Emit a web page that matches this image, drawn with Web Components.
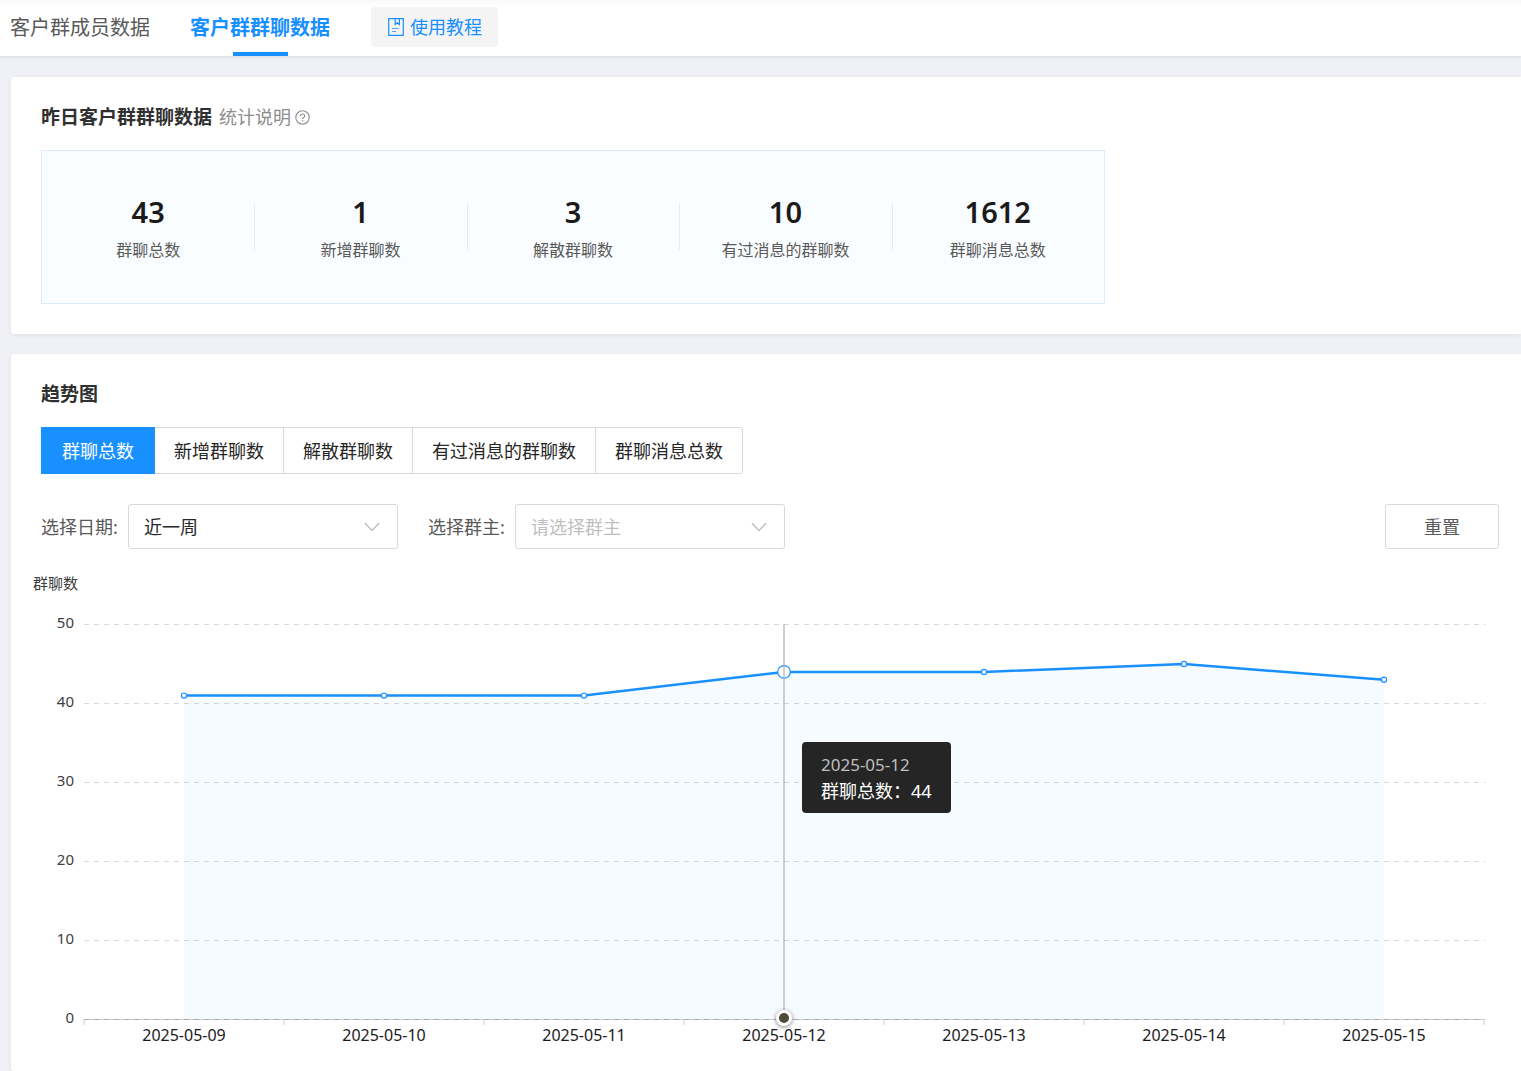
<!DOCTYPE html>
<html lang="zh-CN">
<head>
<meta charset="utf-8">
<meta name="viewport" content="width=device-width, initial-scale=1">
<title>客户群群聊数据</title>
<style>
  html { height: 100%; overflow: hidden; }
  body {
    margin: 0; min-height: 100%; background: #eff1f6; color: #222;
    display: flex; flex-direction: column;
    font: 18px/28px "Noto Sans", "Noto Sans CJK SC", sans-serif;
  }
  main { display: flex; flex-direction: column; gap: 20px; flex: 1; margin: 21px 0 0 11px; }
  data-card:last-child { flex: 1; }
</style>
</head>
<body>
<page-header>
  <nav-tab label="客户群成员数据"></nav-tab>
  <nav-tab label="客户群群聊数据" active></nav-tab>
  <guide-button slot="extra">使用教程</guide-button>
</page-header>
<main>
  <data-card heading="昨日客户群群聊数据">
    <help-note slot="note">统计说明</help-note>
    <stat-panel>
      <stat-item value="43">群聊总数</stat-item>
      <stat-item value="1">新增群聊数</stat-item>
      <stat-item value="3">解散群聊数</stat-item>
      <stat-item value="10">有过消息的群聊数</stat-item>
      <stat-item value="1612">群聊消息总数</stat-item>
    </stat-panel>
  </data-card>
  <data-card heading="趋势图">
    <segment-group options="群聊总数,新增群聊数,解散群聊数,有过消息的群聊数,群聊消息总数"></segment-group>
    <filter-bar>
      <select-field label="选择日期" options="近一周,近一月"></select-field>
      <select-field label="选择群主" placeholder="请选择群主"></select-field>
      <plain-button slot="action">重置</plain-button>
    </filter-bar>
    <trend-chart slot="wide" unit="群聊数" series="群聊总数" max="50" step="10" selected="3"
      data="2025-05-09:41,2025-05-10:41,2025-05-11:41,2025-05-12:44,2025-05-13:44,2025-05-14:45,2025-05-15:43"></trend-chart>
  </data-card>
</main>
<script>
const define = (name, render, after) => customElements.define(name, class extends HTMLElement {
  connectedCallback() {
    if (this.shadowRoot) return;
    const root = this.attachShadow({ mode: 'open' });
    root.innerHTML = '<style>*{box-sizing:border-box}button,select{font:inherit;margin:0}</style>' + render(this);
    if (after) after(root, this);
  }
});

define('page-header', () => `
  <style>
    :host { display: block; background: linear-gradient(#f9f9f9, #fff 8px); box-shadow: 0 1px 3px rgba(0,21,41,.1); }
    header { display: flex; gap: 41px; height: 56px; padding: 0 10px; }
    nav { display: flex; gap: 40px; }
    .extra { display: flex; align-items: center; height: 54px; }
  </style>
  <header><nav><slot></slot></nav><div class="extra"><slot name="extra"></slot></div></header>`);

define('nav-tab', el => `
  <style>
    :host { display: flex; }
    a { display: flex; flex-direction: column; align-items: center; padding-top: 4px; color: #595959; font-size: 20px; line-height: 48px; text-decoration: none; white-space: nowrap; }
    :host([active]) a { color: #1890ff; font-weight: 700; }
    :host([active]) a::after { content: ""; width: 55px; height: 4px; background: #1890ff; }
  </style>
  <a href="#">${el.getAttribute('label')}</a>`);

define('guide-button', () => `
  <style>
    :host { display: block; }
    button { display: flex; align-items: center; gap: 6px; height: 40px; padding: 0 16px 0 17px; border: 0; border-radius: 3px; background: #f4f4f4; color: #1890ff; white-space: nowrap; }
  </style>
  <button type="button">
    <svg width="16" height="18" viewBox="0 0 16 18" fill="none" stroke="#1890ff" stroke-width="1.2" aria-hidden="true">
      <path d="M.7.7h14.6v16.6H.7z"/><path d="M7.2.7v5.8l2.1-1.8 2.1 1.8V.7"/><path d="M4 10.5h6.5M4 13.5h4" stroke-width="1" stroke-opacity=".8"/>
    </svg><slot></slot></button>`);

define('data-card', el => `
  <style>
    :host { display: block; background: #fff; border-radius: 3px 0 0 3px; box-shadow: 0 1px 4px rgba(0,21,41,.08); }
    section { padding: 26px 22px 30px 30px; }
    .head { display: flex; align-items: center; gap: 7px; margin-bottom: 19px; }
    h2 { margin: 0; font-size: 19px; line-height: 28px; font-weight: 700; color: #303030; }
  </style>
  <section>
    <div class="head"><h2>${el.getAttribute('heading')}</h2><slot name="note"></slot></div>
    <slot></slot>
  </section>
  <slot name="wide"></slot>`);

define('help-note', () => `
  <style>:host { display: flex; align-items: center; gap: 4px; color: #8c8c8c; }</style>
  <slot></slot>
  <svg width="15" height="15" viewBox="0 0 15 15" fill="none" stroke="#8c8c8c" stroke-width="1.1" aria-hidden="true">
    <circle cx="7.5" cy="7.5" r="6.7"/><path d="M5.4 6.1c0-2.9 4.3-2.8 4.3-.2 0 1.6-2.1 1.5-2.1 3.2"/><path d="M7.6 10.2v1.2" stroke-width="1.3"/>
  </svg>`);

define('stat-panel', () => `
  <style>:host { display: grid; grid-template-columns: repeat(5, 1fr); box-sizing: border-box; max-width: 1064px; padding: 41px 0 40px; border: 1px solid #d9ecfd; background: #fafdff; }</style>
  <slot></slot>`);

define('stat-item', el => `
  <style>
    :host { display: flex; flex-direction: column; align-items: center; gap: 5px;
      background: linear-gradient(#e8ebee, #e8ebee) left 12px / 1px 46px no-repeat; }
    :host(:first-child) { background: none; }
    b { font-size: 29px; line-height: 40px; font-weight: 600; color: #1a1a1a; }
    span { font-size: 16px; line-height: 26px; color: #595959; white-space: nowrap; }
  </style>
  <b>${el.getAttribute('value')}</b><span><slot></slot></span>`);

define('segment-group', el => `
  <style>
    :host { display: flex; }
    button { height: 47px; padding: 0 19px; border: 1px solid #d9d9d9; background: #fff; color: #262626; white-space: nowrap; }
    button + button { margin-left: -1px; }
    button:first-child { border-radius: 3px 0 0 3px; }
    button:last-child { border-radius: 0 3px 3px 0; }
    button[aria-pressed=true] { position: relative; padding: 0 20px; background: #1890ff; border-color: #1890ff; color: #fff; }
  </style>
  ${el.getAttribute('options').split(',').map((t, i) => `<button type="button" aria-pressed="${i === 0}">${t}</button>`).join('')}`,
  root => root.querySelectorAll('button').forEach(b => b.onclick = () =>
    root.querySelectorAll('button').forEach(o => o.setAttribute('aria-pressed', o === b))));

define('filter-bar', () => `
  <style>
    :host { display: flex; justify-content: space-between; gap: 30px; margin-top: 30px; }
    div { display: flex; gap: 30px; }
  </style>
  <div><slot></slot></div><slot name="action"></slot>`);

define('select-field', el => {
  const hint = el.getAttribute('placeholder');
  const items = (el.getAttribute('options') || '').split(',').filter(Boolean);
  return `
  <style>
    :host { display: flex; align-items: center; }
    label { width: 87px; color: #595959; white-space: nowrap; }
    .box { display: grid; width: 270px; align-items: center; }
    select, svg { grid-area: 1 / 1; }
    select { appearance: none; height: 45px; padding: 0 44px 0 15px; border: 1px solid #d9d9d9; border-radius: 3px; background: #fff; color: ${hint ? '#bfbfbf' : '#262626'}; }
    svg { justify-self: end; margin-right: 18px; pointer-events: none; }
  </style>
  <label for="s">${el.getAttribute('label')}:</label>
  <div class="box">
    <select id="s">${hint ? `<option value="">${hint}</option>` : ''}${items.map(t => `<option>${t}</option>`).join('')}</select>
    <svg width="16" height="10" viewBox="0 0 16 10" fill="none" stroke="#bfbfbf" stroke-width="1.4" aria-hidden="true"><path d="M1 1.2 8 8.6l7-7.4"/></svg>
  </div>`;
});

define('plain-button', () => `
  <style>
    :host { display: block; }
    button { width: 114px; height: 45px; border: 1px solid #d9d9d9; border-radius: 3px; background: #fff; color: #595959; }
  </style>
  <button type="button"><slot></slot></button>`);

define('trend-chart', el => {
  const H = 395, max = +el.getAttribute('max'), step = +el.getAttribute('step');
  const rows = el.getAttribute('data').split(',').map(r => r.split(':'));
  const n = rows.length, sel = +el.getAttribute('selected');
  const px = i => (i + .5) * 100 / n, py = v => H * (1 - v / max) + .5;
  const ticks = [];
  for (let v = max; v >= 0; v -= step) ticks.push(v);
  const pts = rows.map((r, i) => `${px(i)},${py(r[1])}`).join(' ');
  return `
  <style>
    :host { display: block; padding: 0 37px 20px 22px; margin-top: -6px; }
    .unit { font-size: 15px; line-height: 20px; color: #404040; margin-bottom: 19px; }
    .chart { display: grid; grid-template-columns: 41px 1fr; column-gap: 10px; }
    .y { display: flex; flex-direction: column; justify-content: space-between; height: 415px; text-align: right; font-size: 15px; line-height: 20px; color: #404040; }
    .plot { position: relative; margin-top: 11px; }
    .plot { margin-top: 12px; }
    .plot > svg { display: block; width: 100%; height: 401px; overflow: visible; }
    .x { display: grid; grid-template-columns: repeat(${n}, 1fr); text-align: center; font-size: 16px; line-height: 20px; color: #1a1a1a; white-space: nowrap; }
    .tip { position: absolute; left: calc(${px(sel)}% + 18px); top: 118px; padding: 10px 19px 9px; border-radius: 4px; background: rgba(30,30,30,.97); color: #fff; line-height: 26px; white-space: nowrap; }
    .tip time { display: block; font-size: 17px; color: #bfbfbf; }
    .handle { filter: drop-shadow(0 1px 2px rgba(0,0,0,.5)); }
  </style>
  <div class="unit">${el.getAttribute('unit')}</div>
  <div class="chart">
    <div class="y">${ticks.map(v => `<span>${v}</span>`).join('')}</div>
    <div class="plot">
      <svg aria-hidden="true">
        <svg width="100%" height="${H}" viewBox="0 0 100 ${H}" preserveAspectRatio="none">
          <polygon points="${px(0)},${H} ${pts} ${px(n - 1)},${H}" fill="#f6fbff"/>
        </svg>
        <line x1="0" x2="100%" y1="${H + .5}" y2="${H + .5}" stroke="#ccc"/>
        ${ticks.map(v => `<line x1="0" x2="100.1%" y1="${py(v)}" y2="${py(v)}" stroke="#000" stroke-opacity=".15" stroke-dasharray="5 5"/>`).join('')}
        ${[...Array(n + 1).keys()].map(i => `<line x1="${i * 100 / n}%" x2="${i * 100 / n}%" y1="${H}" y2="${H + 6}" stroke="#ccc"/>`).join('')}
        <svg width="100%" height="${H}" viewBox="0 0 100 ${H}" preserveAspectRatio="none">
          <polyline points="${pts}" fill="none" stroke="#1890ff" stroke-width="2.5" stroke-linejoin="round" vector-effect="non-scaling-stroke"/>
        </svg>
        ${rows.map((r, i) => `<circle cx="${px(i)}%" cy="${py(r[1])}" r="${i === sel ? 6.3 : 2.6}" fill="#fff" stroke="#1890ff" stroke-width="1.2"/>`).join('')}
        <line x1="${px(sel)}%" x2="${px(sel)}%" y1="0" y2="${H}" stroke="#aaa" stroke-opacity=".8" stroke-width="1.4"/>
        <g class="handle"><circle cx="${px(sel)}%" cy="${H - 1}" r="8" fill="#fff"/></g>
        <circle cx="${px(sel)}%" cy="${H - 1}" r="5" fill="#504a3b"/>
      </svg>
      <div class="x">${rows.map(r => `<span>${r[0]}</span>`).join('')}</div>
      <div class="tip"><time>${rows[sel][0]}</time>${el.getAttribute('series')}：${rows[sel][1]}</div>
    </div>
  </div>`;
});
</script>
</body>
</html>
